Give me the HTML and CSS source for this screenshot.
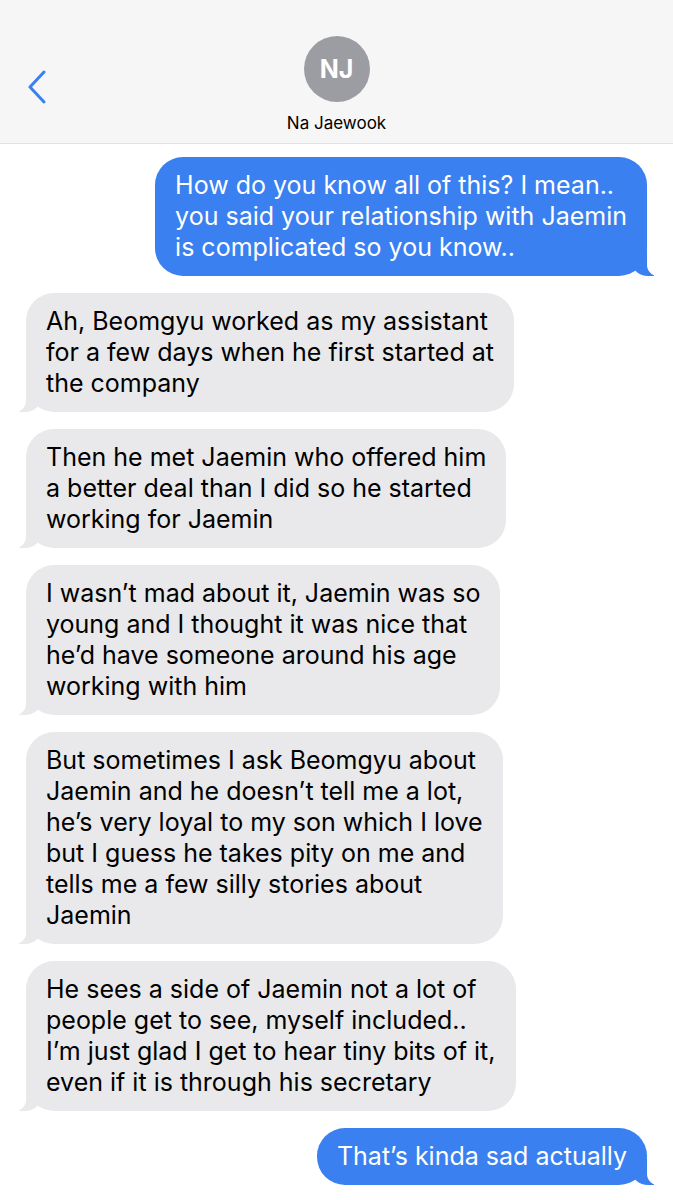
FILE: index.html
```html
<!DOCTYPE html>
<html lang="en">
<head>
    <meta charset="UTF-8">
    <meta name="viewport" content="width=device-width, initial-scale=1.0">
    <title>Na Jaewook</title>
    <link rel="stylesheet" href="styles.css">
</head>
<body>
    <div class="header">
        <div class="back">
            <svg width="20" height="34" viewBox="0 0 20 34">
                <path d="M17 2 L3 17 L17 32" fill="none" stroke="#3a80f0" stroke-width="3" stroke-linecap="round" stroke-linejoin="round"/>
            </svg>
        </div>
        <div class="contact">
            <div class="avatar">NJ</div>
            <div class="name">Na Jaewook</div>
        </div>
    </div>

    <div class="thread">
        <div class="bubble sent">How do you know all of this? I mean..<br>you said your relationship with Jaemin<br>is complicated so you know..</div>

        <div class="bubble received">Ah, Beomgyu worked as my assistant<br>for a few days when he first started at<br>the company</div>

        <div class="bubble received">Then he met Jaemin who offered him<br>a better deal than I did so he started<br>working for Jaemin</div>

        <div class="bubble received">I wasn’t mad about it, Jaemin was so<br>young and I thought it was nice that<br>he’d have someone around his age<br>working with him</div>

        <div class="bubble received">But sometimes I ask Beomgyu about<br>Jaemin and he doesn’t tell me a lot,<br>he’s very loyal to my son which I love<br>but I guess he takes pity on me and<br>tells me a few silly stories about<br>Jaemin</div>

        <div class="bubble received">He sees a side of Jaemin not a lot of<br>people get to see, myself included..<br>I’m just glad I get to hear tiny bits of it,<br>even if it is through his secretary</div>

        <div class="bubble sent">That’s kinda sad actually</div>
    </div>
</body>
</html>
```

FILE: styles.css
```css
body {
    margin: 0;
    background: #ffffff;
    font-family: Inter, 'Liberation Sans', Arial, sans-serif;
    color: #000;
}

.header {
    height: 144px;
    background: #f6f6f6;
    border-bottom: 1px solid #e2e2e2;
    box-sizing: border-box;
    display: flex;
    align-items: flex-start;
    position: relative;
}

.back {
    position: absolute;
    left: 27px;
    top: 70px;
}

.contact {
    flex: 1;
    display: flex;
    flex-direction: column;
    align-items: center;
    padding-top: 36px;
}

.avatar {
    width: 66px;
    height: 66px;
    border-radius: 50%;
    background: #9c9da2;
    color: #fff;
    font-size: 25px;
    font-weight: 700;
    display: flex;
    align-items: center;
    justify-content: center;
}

.name {
    margin-top: 11px;
    font-size: 17px;
}

.thread {
    display: flex;
    flex-direction: column;
    gap: 17px;
    padding: 13px 26px 20px 26px;
}

.bubble {
    position: relative;
    padding: 13px 20px 13px 20px;
    border-radius: 28px;
    font-size: 25px;
    line-height: 31px;
    max-width: 500px;
    box-sizing: border-box;
}

.bubble.sent {
    align-self: flex-end;
    background: #3a80f0;
    color: #fff;
}

.bubble.received {
    align-self: flex-start;
    background: #e9e9eb;
    color: #000;
}

/* tails */
.bubble::before,
.bubble::after {
    content: "";
    position: absolute;
    bottom: 0;
    height: 26px;
}

.bubble.sent::before {
    right: -7px;
    width: 22px;
    background: #3a80f0;
    border-bottom-left-radius: 16px 14px;
}

.bubble.sent::after {
    right: -26px;
    width: 26px;
    background: #fff;
    border-bottom-left-radius: 11px;
}

.bubble.received::before {
    left: -7px;
    width: 22px;
    background: #e9e9eb;
    border-bottom-right-radius: 16px 14px;
}

.bubble.received::after {
    left: -26px;
    width: 26px;
    background: #fff;
    border-bottom-right-radius: 11px;
}
```
